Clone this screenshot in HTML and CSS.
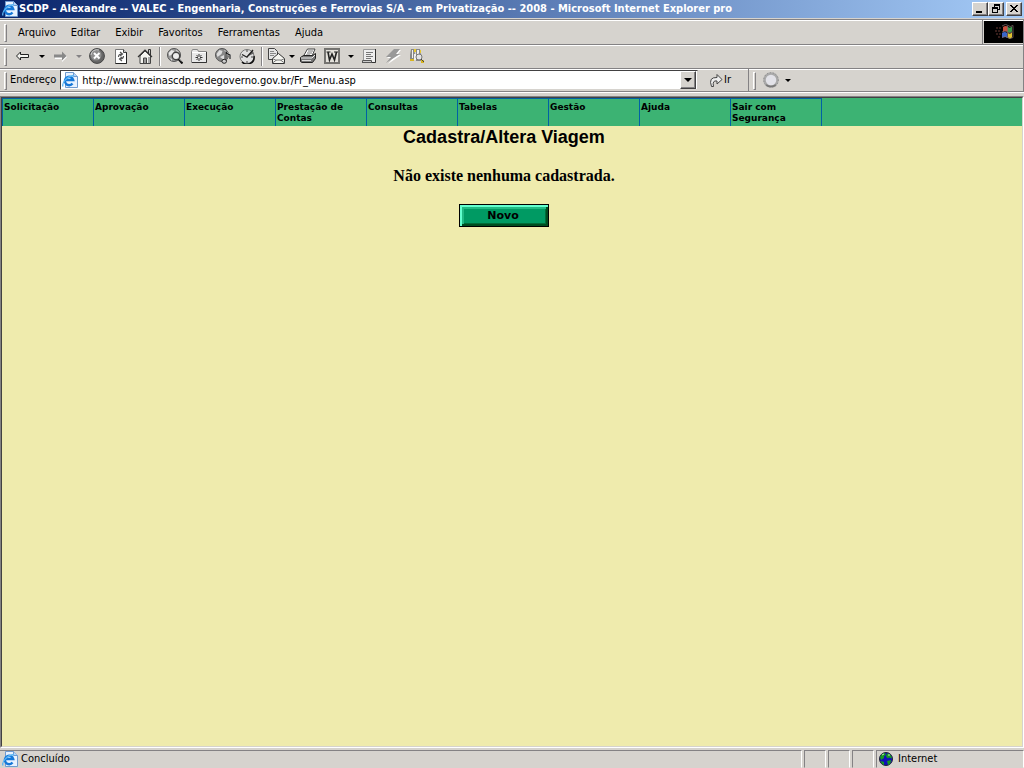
FILE: index.html
```html
<!DOCTYPE html>
<html lang="pt-BR">
<head>
<meta charset="utf-8">
<title>SCDP - Cadastra/Altera Viagem</title>
<link rel="stylesheet" href="styles.css">
</head>
<body>
<svg class="defs" aria-hidden="true">
  <symbol id="ie-page" viewBox="0 0 16 16">
    <path d="M3.500 .5h8l4 4v11h-12z" fill="#e8f2ff" stroke="#6f9bd0"/>
    <path d="M11.500 .5v4h4" fill="#b8d4f6" stroke="#6f9bd0"/>
    <path d="M10.500 11.500a4.200 4.200 0 1 1 .7-3.500H3.500" fill="none" stroke="#1678d8" stroke-width="2.400"/>
    <path d="M1 14.500C-.5 11 5 4 12 3.500" fill="none" stroke="#59b5f5" stroke-width="1.300"/>
  </symbol>
</svg>

<header class="titlebar">
  <svg class="i16"><use href="#ie-page"/></svg>
  <h1 class="titlebar-text">SCDP - Alexandre -- VALEC - Engenharia, Construções e Ferrovias S/A - em Privatização -- 2008 - Microsoft Internet Explorer pro</h1>
  <div class="window-buttons">
    <button class="win" aria-label="Minimizar"><svg viewBox="0 0 12 10" shape-rendering="crispEdges"><path d="M2 7h6v2H2z"/></svg></button>
    <button class="win" aria-label="Restaurar"><svg viewBox="0 0 12 10" shape-rendering="crispEdges"><path d="M4 0h6v6H8V5h1V2H5v1H4zM2 3h6v6H2zM3 5v3h4V5z" fill-rule="evenodd"/></svg></button>
    <button class="win close" aria-label="Fechar"><svg viewBox="0 0 12 10" shape-rendering="crispEdges"><path d="M2 1h2v1h1v1h2V2h1V1h2v1H9v1H8v1H7v1h1v1h1v1h1v1H8V7H7V6H5v1H4v1H2V7h1V6h1V5h1V4H4V3H3V2H2z"/></svg></button>
  </div>
</header>

<div class="bar menubar">
  <nav class="band menus" aria-label="Menu do navegador">
    <span class="grip"></span>
    <button>Arquivo</button><button>Editar</button><button>Exibir</button><button>Favoritos</button><button>Ferramentas</button><button>Ajuda</button>
  </nav>
  <div class="brand">
    <svg viewBox="0 0 20 16">
      <path d="M9 3q3-2 5 0v5q-2-2-5 0z" fill="#c8503c"/><path d="M14 3q2 1.500 4-.5v5q-2 2-4 .5z" fill="#3e9a4c"/>
      <path d="M8 9q3-2 5 0v5q-2-2-5 0z" fill="#3a66c8"/><path d="M14 9q2 1.500 4-.5v5q-2 2-4 .5z" fill="#e0c030"/>
      <path d="M8 2q4-3 6-.500 2 2 5 0v12q-3 2-5 0-2-2-6 0M13.500 2v12M8 8q3-2 5.500 0t5 0" fill="none" stroke="#7c6a68" stroke-width=".8"/>
      <path d="M2 4h2M5 4h2M1 7h2M4 7h2M2 10h2M5 10h2M4 13h2" stroke="#6a3a34" stroke-width="1"/>
    </svg>
  </div>
</div>

<div class="bar toolbar" role="toolbar" aria-label="Botões padrão">
  <span class="grip"></span>
  <button class="tool" aria-label="Voltar"><svg viewBox="0 0 16 16"><path d="M1.500 8L5.500 4v2.500h8v3h-8V12z" fill="#f4f4f0" stroke="#222"/></svg></button>
  <button class="drop" aria-label="Histórico de voltar"></button>
  <button class="tool" aria-label="Avançar"><svg viewBox="0 0 16 16"><path d="M15 9l-5-5v3H3v4h7v3z" fill="#fff"/><path d="M14.500 8L10 3.500v3H2v3h8v3z" fill="#888"/></svg></button>
  <button class="drop off" aria-label="Histórico de avançar"></button>
  <button class="tool stop" aria-label="Parar"><svg viewBox="0 0 16 16"><circle cx="8" cy="8" r="7.400" fill="#666" stroke="#444"/><circle cx="7" cy="7" r="5.500" fill="#8e8e8e"/><path d="M2 7a6 6 0 0 1 8-5" fill="none" stroke="#ccc"/><path d="M5 5l5.500 5.500M10.500 5l-5.500 5.500" stroke="#fff" stroke-width="2"/></svg></button>
  <button class="tool" aria-label="Atualizar"><svg viewBox="0 0 16 16"><path d="M2.500 1.500h8l3 3v11h-11z" fill="#fff" stroke="#777"/><path d="M13.500 4v11.500h-11" fill="none" stroke="#222"/><path d="M10.500 1.500v3h3" fill="#ccc" stroke="#444"/><path d="M5.500 9q0-3 3.500-3M7 4l2.500 2L7 8M10.500 8q0 3-3.500 3M9 9l-2.500 2L9 13" fill="none" stroke="#555" stroke-width="1.200"/></svg></button>
  <button class="tool" aria-label="Página inicial"><svg viewBox="0 0 16 16"><path d="M11.500 1.500h2v6h-2z" fill="#ccc" stroke="#333"/><path d="M3 8v7.500h10.500V8L8 3z" fill="#f4f4f0" stroke="#444"/><path d="M1 9l7-7 7 7" fill="none" stroke="#333" stroke-width="1.200"/><path d="M6.500 15v-5h3v5" fill="#999" stroke="#444"/><path d="M11 9v6h2V9z" fill="#aaa"/></svg></button>
  <span class="sep"></span>
  <button class="tool" aria-label="Pesquisar"><svg viewBox="0 0 16 16"><circle cx="7" cy="7" r="6.500" fill="#999" stroke="#555"/><path d="M1.500 5l3-3 3 1-2 3-3 2zM9 1.500l3 2.500-2 1zM3 10l2 1v2z" fill="#e8e8e8"/><circle cx="9" cy="8" r="3.700" fill="#eee" stroke="#444" stroke-width="1.400"/><path d="M11.500 11l4 4.500" stroke="#111" stroke-width="2.200"/><path d="M12 10.500l3 3" stroke="#ccc"/></svg></button>
  <button class="tool" aria-label="Favoritos"><svg viewBox="0 0 16 16"><path d="M.5 14.500v-11l1-2h5l1 2h8v11z" fill="#e8e8e8" stroke="#888"/><path d="M1 14.500h14.500V4" fill="none" stroke="#333"/><path d="M1 4.500h14" stroke="#fff"/><path d="M8 6v7M4.500 9.500h7M5.500 7l5 5M10.500 7l-5 5" stroke="#333"/><circle cx="8" cy="9.500" r="1" fill="#fff"/></svg></button>
  <button class="tool" aria-label="Mídia"><svg viewBox="0 0 16 16"><circle cx="7" cy="7" r="6.500" fill="#888" stroke="#555"/><path d="M1.500 6l3-4 3 1-1 3-4 3zM5 9l4-2v5zM9 2l2 1v2z" fill="#ddd"/><path d="M11 13V3.500q0 2 4 3.500v4" fill="none" stroke="#ddd" stroke-width="2"/><path d="M11 13V3.500q0 2 4 3.500v4" fill="none" stroke="#222" stroke-width="1.200"/><ellipse cx="9.200" cy="13.300" rx="2.300" ry="2" fill="#ccc" stroke="#222"/></svg></button>
  <button class="tool" aria-label="Histórico"><svg viewBox="0 0 16 16"><circle cx="8" cy="8.500" r="7" fill="#e0e0e0" stroke="#777"/><path d="M15 8a7 7 0 0 1-12 6" fill="none" stroke="#111" stroke-width="1.500"/><path d="M8 8.500l5.500-6 1.500 3z" fill="#666"/><path d="M8 9l6-7M8.500 9.500L3 6.500" stroke="#222" stroke-width="1.300"/><path d="M8 2v2M12 9h2M8 13v2M2 9h2" stroke="#444"/></svg></button>
  <span class="sep"></span>
  <button class="tool mail" aria-label="Correio"><svg viewBox="0 0 18 16"><path d="M1.500 .5h6l3 3v8h-9z" fill="#e4e4e4" stroke="#444"/><path d="M3 3.500h4M3 5.500h6M3 7.500h4" stroke="#888"/><path d="M5.500 10.500l6-5 6 5v5h-12z" fill="#f5f5f0" stroke="#333"/><path d="M5.500 15l4-3h4l4 3M5.500 10.500l4 2M17.500 10.500l-4 2" fill="none" stroke="#777"/></svg></button>
  <button class="drop small" aria-label="Opções de correio"></button>
  <button class="tool print" aria-label="Imprimir"><svg viewBox="0 0 16 16"><path d="M3.500 8l4-7h7.500l-3 7z" fill="#fff" stroke="#444"/><path d="M8 3h5M7 5h5M6 7h4" stroke="#777"/><path d="M.5 9.500l3-2h9l3-2v5l-3 4H2l-1.500-1z" fill="#777" stroke="#222"/><path d="M1 10h11l3-3" fill="none" stroke="#eee"/><path d="M2 12.500h9" stroke="#ddd"/></svg></button>
  <button class="tool" aria-label="Editar com Word"><svg viewBox="0 0 16 16"><rect x=".5" y=".5" width="15" height="15" fill="#d6d3ce" stroke="#111" stroke-dasharray="1 1"/><rect x="1.500" y="1.500" width="13" height="13" fill="#e4e2dc" stroke="#111" stroke-dasharray="1 1"/><path d="M4 4l1.500 8L8 6l2.500 6L12.500 4" fill="none" stroke="#222" stroke-width="1.600"/><path d="M2.500 4h4M10 4h4" stroke="#222"/></svg></button>
  <button class="drop" aria-label="Opções de edição"></button>
  <button class="tool" aria-label="Discutir"><svg viewBox="0 0 16 16"><path d="M2.500 1.500h12v13h-12z" fill="#eee" stroke="#999"/><path d="M1 14.500h13.500V1" fill="none" stroke="#333"/><path d="M1.500 12.500h9v2h-9z" fill="#ccc" stroke="#555"/><path d="M5 4.500h7M5 6.500h5M5 8.500h7M5 10.500h5" stroke="#777"/></svg></button>
  <button class="tool" aria-label="Conexão"><svg viewBox="0 0 16 16"><path d="M10 2h6l-4 5h4L3 16l5-6H2z" fill="#fff"/><path d="M9 1h6l-4 5h4L1 15l5-6H1z" fill="#999"/></svg></button>
  <button class="tool" aria-label="Messenger"><svg viewBox="0 0 16 16"><path d="M2 1h3l1 5v6H1V7zM7 1h4l1 6v6H7z" fill="#888"/><path d="M3 2h1v8H3zM5 6h2v6H5zM8 2h2v7H8z" fill="#f0f0f0"/><path d="M1 11h4v2H1zM12 12h3v3h-3z" fill="#d8b520"/><circle cx="10" cy="9" r="3" fill="#e4e4e4" stroke="#777"/><path d="M12 11l3 3" stroke="#444"/><path d="M5 1h2v3H5zM11 2h1v3h-1z" fill="#e6c72e"/></svg></button>
</div>

<div class="bar addressbar">
  <form class="band address">
    <span class="grip"></span>
    <label for="url">Endereço</label>
    <div class="field">
      <svg class="i16"><use href="#ie-page"/></svg>
      <input id="url" type="text" value="http://www.treinascdp.redegoverno.gov.br/Fr_Menu.asp">
      <button type="button" class="win combo" aria-label="Mostrar endereços"></button>
    </div>
    <button type="button" class="go"><svg viewBox="0 0 14 16"><path d="M2.500 14.500Q-1 5 8 5.500v-3l5 5-5 4.500V9Q3 8 4.500 14.500z" fill="#eee" stroke="#444"/></svg>Ir</button>
  </form>
  <div class="extra">
    <span class="grip"></span>
    <button class="tool" aria-label="Complemento"><svg viewBox="0 0 16 16"><circle cx="8" cy="8" r="6.500" fill="#e2e2e8" stroke="#aaa" stroke-width="2.500"/><path d="M3 13q5 3 10 0" fill="none" stroke="#777" stroke-width="1.500"/><circle cx="8" cy="8" r="7.300" fill="none" stroke="#888" stroke-dasharray="1 2"/></svg></button>
    <button class="drop small" aria-label="Opções do complemento"></button>
  </div>
</div>

<div class="viewport">
  <nav class="sitemenu" aria-label="Menu do sistema">
    <a href="#">Solicitação</a><a href="#">Aprovação</a><a href="#">Execução</a><a href="#">Prestação de Contas</a><a href="#">Consultas</a><a href="#">Tabelas</a><a href="#">Gestão</a><a href="#">Ajuda</a><a href="#">Sair com Segurança</a>
  </nav>
  <main class="page">
    <h2>Cadastra/Altera Viagem</h2>
    <p>Não existe nenhuma cadastrada.</p>
    <button class="novo">Novo</button>
  </main>
</div>

<footer class="statusbar">
  <div class="pane message"><svg class="i16"><use href="#ie-page"/></svg>Concluído</div>
  <div class="pane"></div>
  <div class="pane"></div>
  <div class="pane"></div>
  <div class="pane zone"><svg viewBox="0 0 14 14"><circle cx="7" cy="7" r="6.500" fill="#1010b8" stroke="#223"/><path d="M1 5q2-4 5-4l1 2-2 1v2l-3 2zM8 1.500q4 0 5 5l-3-1-1 1-2-2zM8 9l4-1q0 4-3 5zM2 9l3 1v3q-3-1-3-4z" fill="#159a22"/><path d="M3 3l2-1M9 3h2" stroke="#b8f0b0"/></svg>Internet</div>
</footer>
</body>
</html>
```

FILE: styles.css
```css
* { box-sizing: border-box; }

body {
  margin: 0;
  min-height: 100vh;
  display: flex;
  flex-direction: column;
  background: #d6d3ce;
  color: #000;
  font: 11px/14px "DejaVu Sans Condensed", Tahoma, sans-serif;
}

button {
  padding: 0;
  border: 0;
  background: none;
  color: inherit;
  font: inherit;
}

svg { display: block; flex: none; }
.defs { position: absolute; width: 0; height: 0; }
.i16 { width: 16px; height: 16px; }

.titlebar {
  display: flex;
  align-items: center;
  gap: 1px;
  height: 18px;
  padding: 0 2px;
  background: linear-gradient(90deg, #08246b, #a5cbf7);
  color: #fff;
}
.titlebar-text {
  flex: 1;
  min-width: 0;
  margin: 0;
  overflow: hidden;
  white-space: nowrap;
  font-size: 11px;
  line-height: 16px;
}
.window-buttons { display: flex; }

.win {
  display: flex;
  align-items: center;
  justify-content: center;
  width: 16px;
  height: 14px;
  background: #d6d3ce;
  border: 1px solid;
  border-color: #fff #424142 #424142 #fff;
  box-shadow: inset -1px -1px #848284;
}
.win svg { width: 12px; height: 10px; }
.close { margin-left: 2px; }

.bar {
  display: flex;
  align-items: center;
  height: 24px;
  border-top: 1px solid #848284;
  border-right: 1px solid #848284;
  box-shadow: inset 0 1px #fff;
}
.menubar { height: 25px; margin-top: 1px; }
.toolbar { padding-bottom: 1px; }
.band { display: flex; align-items: center; flex: 1; }

.grip {
  flex: none;
  width: 3px;
  height: 18px;
  margin: 1px 3px 0 4px;
  border: 1px solid;
  border-color: #fff #848284 #848284 #fff;
}
.toolbar .grip { margin-right: 4px; }

.menus { align-self: stretch; border-right: 1px solid #848284; }
.menus button { padding: 2px 7px 0 8px; }
.brand {
  display: flex;
  align-items: center;
  justify-content: center;
  width: 39px;
  height: 22px;
  margin-left: 1px;
  background: #000;
}
.brand svg { width: 20px; height: 16px; }

.tool {
  display: flex;
  align-items: center;
  justify-content: center;
  flex: none;
  width: 24px;
  height: 22px;
}
.tool svg { width: 16px; height: 16px; }
.mail { width: 22px; }
.mail svg { width: 18px; }

.drop {
  display: flex;
  align-items: center;
  justify-content: center;
  width: 13px;
  height: 20px;
}
.drop::before, .combo::before {
  content: "";
  border: 3px solid transparent;
  border-top-color: #000;
  border-bottom: 0;
}
.off::before { border-top-color: #848284; }
.small { width: 9px; }

.sep {
  width: 2px;
  height: 19px;
  margin: 0 2px;
  border-left: 1px solid #848284;
  border-right: 1px solid #fff;
}

.addressbar { border-bottom: 1px solid #848284; }
.address { margin: 0; }
.field {
  display: flex;
  align-items: center;
  flex: 1;
  height: 20px;
  margin-left: 4px;
  padding: 0 1px;
  background: #fff;
  border: 1px solid;
  border-color: #424142 #d6d3ce #d6d3ce #424142;
}
.field input {
  flex: 1;
  min-width: 0;
  height: 16px;
  padding: 0 4px;
  border: 0;
  background: none;
  font: inherit;
}
.combo { height: 18px; }
.combo::before { border-width: 4px 4px 0; }
.go {
  display: flex;
  align-items: center;
  gap: 1px;
  width: 50px;
  padding-left: 11px;
}
.go svg { width: 14px; height: 16px; }
.extra {
  display: flex;
  align-items: center;
  width: 275px;
  border-left: 1px solid #848284;
}

.viewport {
  flex: 1;
  display: flex;
  flex-direction: column;
  margin-top: 4px;
  border: 1px solid;
  border-color: #848284 #fff #fff #848284;
  box-shadow: 0 -3px #d6d3ce, 0 -4px #fff;
}
.sitemenu {
  display: flex;
  min-height: 29px;
  background: #3cb373;
  border-top: 1px solid #424142;
  border-left: 1px solid #424142;
  border-right: 1px solid #d6d3ce;
}
.sitemenu a {
  width: 91px;
  padding: 3px 0 2px 1px;
  border-top: 1px solid #0061a5;
  border-left: 1px solid #0061a5;
  color: #000;
  font: bold 9px/11px "DejaVu Sans", Verdana, sans-serif;
  text-decoration: none;
}
.sitemenu a:last-child { width: 92px; border-right: 1px solid #0061a5; }

.page {
  flex: 1;
  display: flex;
  flex-direction: column;
  align-items: center;
  padding-right: 16px;
  background: #efebad;
  border-left: 1px solid #424142;
  border-right: 1px solid #d6d3ce;
  border-bottom: 1px solid #d6d3ce;
}
.page h2 {
  margin: 0;
  font: bold 18px/22px "Liberation Sans", Arial, sans-serif;
}
.page p {
  margin: 18px 0;
  font: bold 16px/20px "Liberation Serif", "Times New Roman", serif;
}
.novo {
  width: 90px;
  height: 23px;
  padding: 1px 2px 0 0;
  background: #009a63;
  border: 1px solid #000;
  box-shadow: inset 2px 2px #63ffce, inset -2px -2px #004d20, inset 4px 4px #21ba84, inset -3px -3px #006d39;
  font: bold 11px/20px "DejaVu Sans", Verdana, sans-serif;
}

.statusbar {
  display: flex;
  gap: 2px;
  height: 20px;
  padding-top: 2px;
}
.pane {
  display: flex;
  align-items: center;
  gap: 3px;
  width: 22px;
  padding-left: 2px;
  border: 1px solid;
  border-color: #848284 #fff transparent #848284;
}
.message { flex: 1; border-left: 0; }
.zone { width: 148px; gap: 5px; }
.zone svg { width: 14px; height: 14px; }
```
